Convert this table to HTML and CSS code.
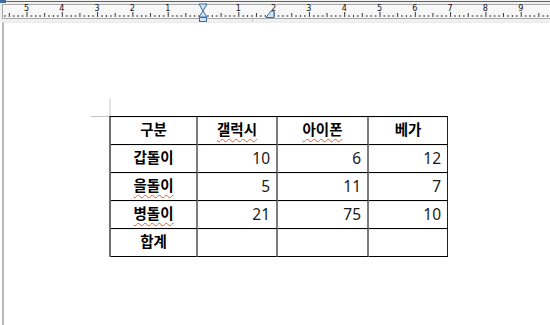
FILE: index.html
```html
<!DOCTYPE html>
<html lang="ko">
<head>
<meta charset="utf-8">
<link rel="stylesheet" href="styles.css">
</head>
<body>
<div class="ruler">
<svg width="550" height="22" viewBox="0 0 550 22" xmlns="http://www.w3.org/2000/svg">
  <defs>
    <pattern id="ticks" patternUnits="userSpaceOnUse" x="203" y="0" width="35.3" height="22">
      <rect x="4.4" y="15" width="1" height="2" fill="#333"/>
      <rect x="8.8" y="15" width="1" height="2" fill="#333"/>
      <rect x="13.2" y="15" width="1" height="2" fill="#333"/>
      <rect x="17.6" y="13" width="1" height="4" fill="#333"/>
      <rect x="22.0" y="15" width="1" height="2" fill="#333"/>
      <rect x="26.4" y="15" width="1" height="2" fill="#333"/>
      <rect x="30.8" y="15" width="1" height="2" fill="#333"/>
      <rect x="0" y="12" width="1" height="5" fill="#333"/>
    </pattern>
  </defs>
  <rect x="0" y="0" width="550" height="22" fill="#f0f0f0"/>
  <rect x="0" y="1" width="550" height="1" fill="#3f6c9b"/>
  <rect x="0" y="0" width="6" height="3" fill="#3f6c9b"/>
  <rect x="2.5" y="4.5" width="560" height="14" fill="#f7f7f7" stroke="#a8a8a8"/>
  <rect x="3" y="5" width="547" height="13" fill="url(#ticks)"/>
  <g class="nums">
    <text x="26.5" y="11">5</text>
    <text x="61.8" y="11">4</text>
    <text x="97.1" y="11">3</text>
    <text x="132.4" y="11">2</text>
    <text x="167.7" y="11">1</text>
    <text x="238.3" y="11">1</text>
    <text x="273.6" y="11">2</text>
    <text x="308.9" y="11">3</text>
    <text x="344.2" y="11">4</text>
    <text x="379.5" y="11">5</text>
    <text x="414.8" y="11">6</text>
    <text x="450.1" y="11">7</text>
    <text x="485.4" y="11">8</text>
    <text x="520.7" y="11">9</text>
  </g>
  <polygon points="199,4 207,4 203,11" fill="#cfe4f5" stroke="#3f6c9b" stroke-width="1"/>
  <polygon points="203,11 199,17 207,17" fill="#cfe4f5" stroke="#3f6c9b" stroke-width="1"/>
  <rect x="199.5" y="17.5" width="7" height="4" fill="#cfe4f5" stroke="#3f6c9b"/>
  <polygon points="266,17.5 271,11 274,11 274,17.5" fill="#cfe4f5" stroke="#3f6c9b" stroke-width="1"/>
  <rect x="252" y="19" width="1" height="3" fill="#c8c8c8"/>
</svg>
</div>
<div class="page">
  <div class="table-wrap">
    <table class="grid">
      <tr class="head">
        <td class="c1">구분</td>
        <td class="c2"><span class="spell">갤럭시</span></td>
        <td class="c3"><span class="spell">아이폰</span></td>
        <td class="c4">베가</td>
      </tr>
      <tr>
        <td class="label">갑돌이</td>
        <td class="num">10</td>
        <td class="num">6</td>
        <td class="num">12</td>
      </tr>
      <tr>
        <td class="label"><span class="spell">을돌이</span></td>
        <td class="num">5</td>
        <td class="num">11</td>
        <td class="num">7</td>
      </tr>
      <tr>
        <td class="label"><span class="spell">병돌이</span></td>
        <td class="num">21</td>
        <td class="num">75</td>
        <td class="num">10</td>
      </tr>
      <tr>
        <td class="label">합계</td>
        <td class="num"></td>
        <td class="num"></td>
        <td class="num"></td>
      </tr>
    </table>
  </div>
</div>
</body>
</html>
```

FILE: styles.css
```css
html, body {
  margin: 0;
  padding: 0;
  background: #ffffff;
  overflow: hidden;
}

body {
  width: 550px;
  height: 325px;
  font-family: "Noto Sans", "Noto Sans CJK KR", sans-serif;
}

.ruler {
  height: 22px;
  line-height: 0;
}

.ruler svg {
  display: block;
}

.nums text {
  font-family: "DejaVu Sans", sans-serif;
  font-size: 8px;
  fill: #111;
  text-anchor: middle;
}

.page {
  height: 303px;
  margin-left: 2px;
  border-left: 2px solid #b8b8b8;
  border-top: 1px solid #ececec;
  box-sizing: border-box;
}

.table-wrap {
  position: relative;
  margin-left: 105px;
  padding-top: 93px;
  width: max-content;
}

.table-wrap::before {
  content: "";
  position: absolute;
  left: 0;
  top: 75px;
  width: 2px;
  height: 18px;
  background: #e4e4e4;
}

.table-wrap::after {
  content: "";
  position: absolute;
  left: -18px;
  top: 93px;
  width: 18px;
  height: 1px;
  background: #c4c4c4;
}

.grid {
  border-collapse: separate;
  border-spacing: 0;
  border-top: 1px solid #000;
  border-left: 2px solid #6e6e6e;
}

.grid tr {
  height: 28px;
}

.grid td {
  height: 28px;
  padding: 0 6px 0 0;
  box-sizing: border-box;
  border-right: 2px solid #7c7c7c;
  border-bottom: 1px solid #000;
  box-shadow: inset 0 1px 0 #ececec;
  font-size: 15px;
  color: #1a1a1a;
  vertical-align: middle;
  line-height: 1;
}

.grid td:last-child {
  border-right: 1px solid #222;
}

.grid .c1 { width: 87px; }
.grid .c2 { width: 80px; }
.grid .c3 { width: 91px; }
.grid .c4 { width: 79px; }

.grid .head td,
.grid .label {
  font-family: "Noto Sans CJK KR", sans-serif;
  font-weight: 700;
  font-size: 14.5px;
  text-align: center;
  padding: 0 0 2px 0;
  color: #000;
}

.grid .num {
  text-align: right;
  font-family: "Noto Sans", "Noto Sans CJK KR", sans-serif;
  font-size: 15.5px;
  padding-top: 1px;
}

.spell {
  text-decoration: underline wavy #e2602a;
  text-decoration-thickness: 1px;
  text-underline-offset: 3px;
}
```
